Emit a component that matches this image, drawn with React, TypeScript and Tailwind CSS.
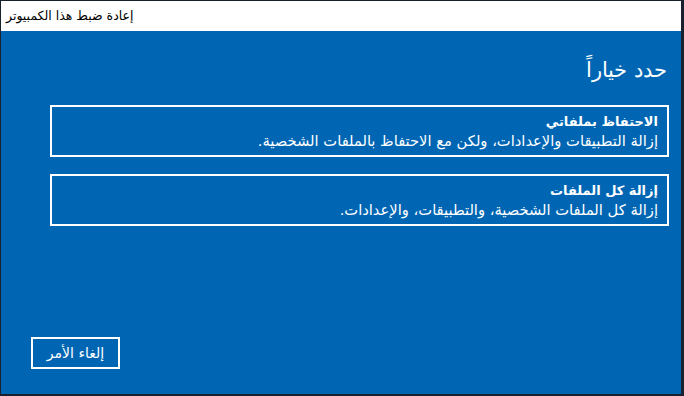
import React from "react";

const options = [
  {
    title: "الاحتفاظ بملفاتي",
    desc: "إزالة التطبيقات والإعدادات، ولكن مع الاحتفاظ بالملفات الشخصية.",
  },
  {
    title: "إزالة كل الملفات",
    desc: "إزالة كل الملفات الشخصية، والتطبيقات، والإعدادات.",
  },
];

export default function App() {
  return (
    <div
      className="w-[684px] h-[396px] bg-[#18212d] pt-px pl-px pr-[3px] pb-[2px] flex flex-col"
      style={{ fontFamily: '"DejaVu Sans", "Noto Sans", sans-serif' }}
    >
      {/* Title bar */}
      <div className="h-[30px] bg-white flex items-center px-[5px] text-[12.5px] text-black">
        <span dir="rtl">إعادة ضبط هذا الكمبيوتر</span>
      </div>

      {/* Body */}
      <div dir="rtl" className="flex-1 bg-[#0066b4] text-white flex flex-col pr-[12px] pl-[30px]">
        <h1 className="mt-[22px] mr-[2px] text-[21px] font-light leading-[34px]">حدد خياراً</h1>

        <div className="mt-[18px] ml-[19px] flex flex-col gap-[17px]">
          {options.map((o) => (
            <div key={o.title} className="border-2 border-white h-[52px] px-[9px] flex flex-col justify-center">
              <div className="text-[13px] font-bold leading-[19px]">{o.title}</div>
              <div className="text-[14.7px] leading-[20px]">{o.desc}</div>
            </div>
          ))}
        </div>

        <div className="mt-auto mb-[25px] flex justify-end">
          <button className="w-[89px] h-[32px] border-2 border-white text-[14px] text-white">
            إلغاء الأمر
          </button>
        </div>
      </div>
    </div>
  );
}
